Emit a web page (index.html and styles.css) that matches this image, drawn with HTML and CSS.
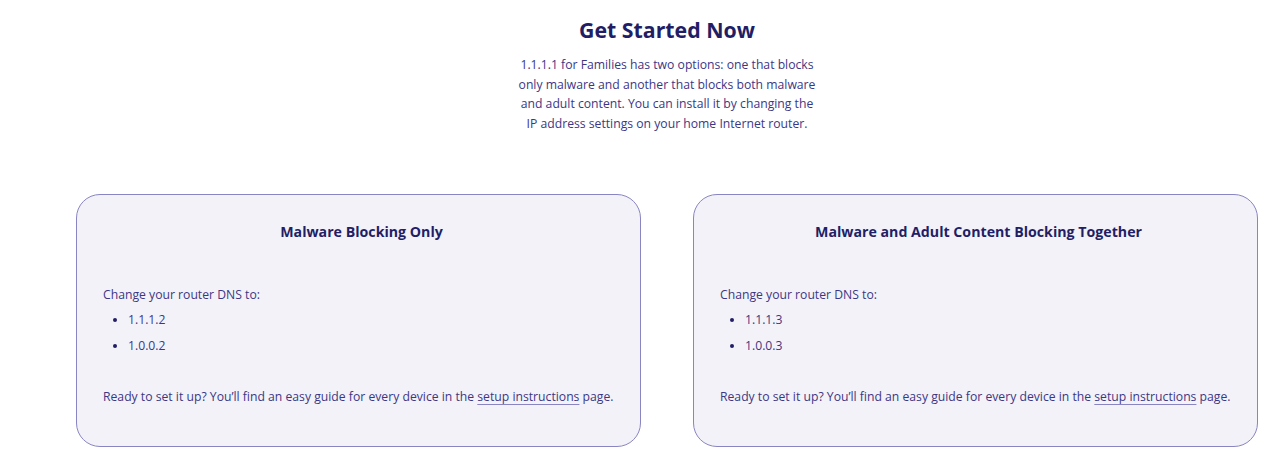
FILE: index.html
```html
<!DOCTYPE html>
<html lang="en">
<head>
<meta charset="utf-8">
<title>Get Started Now</title>
<link rel="stylesheet" href="styles.css">
</head>
<body>
<main class="page">
  <section class="intro">
    <h1 class="intro-title">Get Started Now</h1>
    <p class="intro-text">1.1.1.1 for Families has two options: one that blocks only malware and another that blocks both malware and adult content. You can install it by changing the IP address settings on your home Internet router.</p>
  </section>
  <section class="cards">
    <article class="card">
      <h2 class="card-title">Malware Blocking Only</h2>
      <p class="card-text">Change your router DNS to:</p>
      <ul class="dns-list">
        <li>1.1.1.2</li>
        <li>1.0.0.2</li>
      </ul>
      <p class="card-text card-foot">Ready to set it up? You’ll find an easy guide for every device in the <a class="link" href="#">setup instructions</a> page.</p>
    </article>
    <article class="card">
      <h2 class="card-title">Malware and Adult Content Blocking Together</h2>
      <p class="card-text">Change your router DNS to:</p>
      <ul class="dns-list">
        <li>1.1.1.3</li>
        <li>1.0.0.3</li>
      </ul>
      <p class="card-text card-foot">Ready to set it up? You’ll find an easy guide for every device in the <a class="link" href="#">setup instructions</a> page.</p>
    </article>
  </section>
</main>
</body>
</html>
```

FILE: styles.css
```css
* { box-sizing: border-box; }
html, body { margin: 0; padding: 0; background: #ffffff; }
body {
  font-family: "Open Sans", "Noto Sans", "Liberation Sans", sans-serif;
  color: #3c3784;
}
.page {
  padding: 14px 22px 0 76px;
}
.intro {
  display: flex;
  flex-direction: column;
  align-items: center;
  text-align: center;
}
.intro-title {
  margin: 0;
  font-size: 21.3px;
  line-height: 32px;
  font-weight: 700;
  color: #221e66;
}
.intro-text {
  margin: 9px 0 0;
  width: 302px;
  font-size: 12.2px;
  line-height: 19.5px;
  color: #3c3784;
}
.cards {
  margin-top: 61px;
  display: grid;
  grid-template-columns: 1fr 1fr;
  gap: 52px;
}
.card {
  height: 253px;
  background: #f3f2f8;
  border: 1px solid #8985c2;
  border-radius: 24px;
  padding: 26px 20px 0 26px;
}
.card-title {
  margin: 0;
  text-align: center;
  font-size: 14.2px;
  line-height: 22px;
  font-weight: 700;
  color: #221e66;
}
.card-text {
  margin: 42px 0 0;
  font-size: 12.2px;
  line-height: 20px;
}
.dns-list {
  margin: 5px 0 0;
  padding-left: 25px;
  font-size: 12.2px;
  line-height: 20px;
}
.dns-list li { margin-bottom: 6px; }
.dns-list li::marker { color: #221e66; }
.card-foot { margin-top: 31px; white-space: nowrap; }
.link {
  color: #3c3784;
  text-decoration: underline;
  text-decoration-color: #8985c2;
  text-underline-offset: 3px;
}
```
